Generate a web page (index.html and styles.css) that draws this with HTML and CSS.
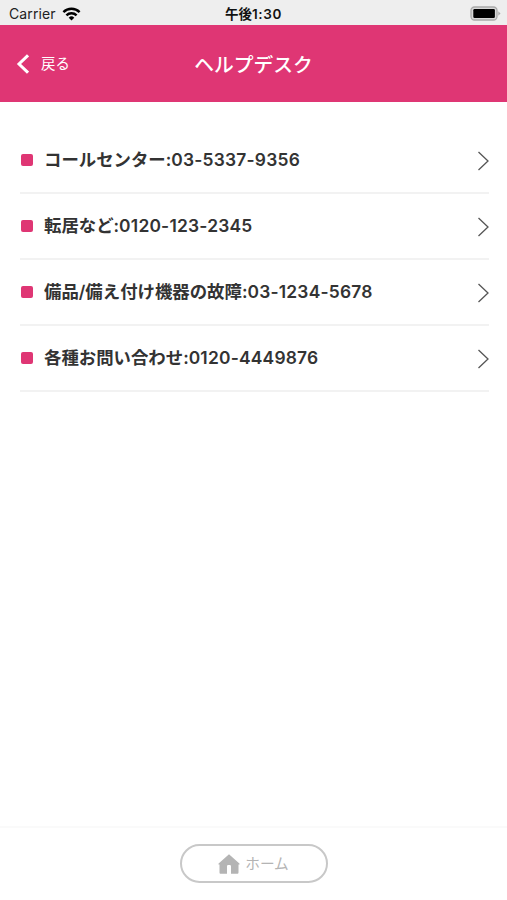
FILE: index.html
```html
<!DOCTYPE html>
<html lang="ja">
<head>
    <meta charset="UTF-8">
    <meta name="viewport" content="width=device-width, initial-scale=1.0">
    <title>ヘルプデスク</title>
    <link rel="stylesheet" href="styles.css">
</head>
<body>

<div class="status-bar">
    <div class="carrier">
        <span>Carrier</span>
        <svg class="wifi" width="19" height="14" viewBox="0 0 18 14" fill="none" stroke="#000" stroke-width="2.4">
            <path d="M0.9 5.1a11.5 11.5 0 0 1 16.2 0"/>
            <path d="M3.9 8.3a7.2 7.2 0 0 1 10.2 0"/>
            <path d="M6.2 10.7a4 4 0 0 1 5.6 0L9 13.6z" fill="#000" stroke="none"/>
        </svg>
    </div>
    <div class="clock">午後<span class="time">1:30</span></div>
    <svg class="battery" width="31" height="15" viewBox="0 0 31 15">
        <rect x="1" y="1" width="26" height="13" rx="3.5" fill="#d8d8d8" stroke="#a9a9a9" stroke-width="1.3"/>
        <rect x="3.3" y="3" width="21.6" height="9" rx="1.2" fill="#000"/>
        <path d="M28.3 5.3l2.2 2.2-2.2 2.2z" fill="#a9a9a9"/>
    </svg>
</div>

<div class="header">
    <a class="back" href="#">
        <svg width="14" height="20" viewBox="0 0 14 20" fill="none" stroke="#fff" stroke-width="3">
            <path d="M13 1.3L4 10l9 8.7"/>
        </svg>
        <span>戻る</span>
    </a>
    <h1 class="title">ヘルプデスク</h1>
</div>

<ul class="list">
    <li class="item">
        <span class="mark"></span>
        <span class="label">コールセンター:<span class="tel">03-5337-9356</span></span>
        <svg class="arrow" width="12" height="20" viewBox="0 0 12 20"><path d="M1.500 1l9.500 9-9.500 9"/></svg>
    </li>
    <li class="item">
        <span class="mark"></span>
        <span class="label">転居など:<span class="tel">0120-123-2345</span></span>
        <svg class="arrow" width="12" height="20" viewBox="0 0 12 20"><path d="M1.500 1l9.500 9-9.500 9"/></svg>
    </li>
    <li class="item">
        <span class="mark"></span>
        <span class="label">備品/備え付け機器の故障:<span class="tel">03-1234-5678</span></span>
        <svg class="arrow" width="12" height="20" viewBox="0 0 12 20"><path d="M1.500 1l9.500 9-9.500 9"/></svg>
    </li>
    <li class="item">
        <span class="mark"></span>
        <span class="label">各種お問い合わせ:<span class="tel">0120-4449876</span></span>
        <svg class="arrow" width="12" height="20" viewBox="0 0 12 20"><path d="M1.500 1l9.500 9-9.500 9"/></svg>
    </li>
</ul>

<div class="footer">
    <a class="home-button" href="#">
        <svg width="22" height="20" viewBox="0 0 22 20" fill="#b4b4b4">
            <path d="M11 0.3L0.6 9.4c-.4.5-.2 1.100.4 1.100H1.500V18.200c0 1 .4 1.500 1.400 1.500H9V12.500c0-1 .4-1.500 1.300-1.500h1.400c.9 0 1.300.5 1.300 1.500v7.200h6.100c1 0 1.400-.5 1.400-1.500v-7.700h.5c.6 0 .8-.6.400-1.100z"/>
        </svg>
        <span>ホーム</span>
    </a>
</div>

</body>
</html>
```
FILE: styles.css
```css
* {
    box-sizing: border-box;
}
body {
    display: flex;
    flex-direction: column;
    height: 100vh;
    margin: 0;
    background-color: #fff;
    color: #333;
    font-family: Inter, "Noto Sans CJK JP", sans-serif;
}
a {
    color: inherit;
    text-decoration: none;
}

/* Status bar */
.status-bar {
    display: grid;
    grid-template-columns: 1fr auto 1fr;
    align-items: center;
    height: 25px;
    padding: 2px 6px 0 9px;
    background-color: #eee;
    color: #222;
    font-size: 14px;
    line-height: 20px;
}
.carrier {
    display: flex;
    align-items: center;
    gap: 6px;
    letter-spacing: 0.1px;
}
.clock {
    margin-right: 3px;
    color: #111;
    font-size: 13.5px;
    font-weight: 600;
}
.time {
    letter-spacing: 0.6px;
}
.battery {
    justify-self: end;
}

/* Header */
.header {
    display: grid;
    grid-template-columns: 1fr auto 1fr;
    align-items: center;
    height: 77px;
    padding: 0 15px;
    background-color: #df3674;
    color: #fff;
}
.back {
    display: flex;
    align-items: center;
    gap: 12px;
    font-size: 14.4px;
}
.back span {
    padding-bottom: 2px;
}
.title {
    margin: 0;
    font-size: 19.8px;
    font-weight: 500;
}

/* Phone list */
.list {
    flex: 1;
    margin: 0;
    padding: 26px 18px 0 20px;
    list-style: none;
}
.item {
    display: flex;
    align-items: center;
    height: 66px;
    border-bottom: 2px solid #f2f2f2;
}
.mark {
    width: 12px;
    height: 12px;
    margin: 0 11px 0 1px;
    border-radius: 2px;
    background-color: #df3674;
}
.label {
    flex: 1;
    padding-bottom: 3px;
    font-size: 17.4px;
    font-weight: 600;
    white-space: nowrap;
}
.tel {
    letter-spacing: 0.22px;
}
.arrow {
    margin-top: 1px;
    fill: none;
    stroke: #555;
    stroke-width: 1.3;
}

/* Footer */
.footer {
    display: flex;
    justify-content: center;
    height: 74px;
    padding-top: 16px;
    border-top: 2px solid #fafafa;
}
.home-button {
    display: flex;
    align-items: center;
    justify-content: center;
    gap: 5px;
    width: 148px;
    height: 39px;
    border: 2px solid #c8c8c8;
    border-radius: 20px;
    color: #b4b4b4;
    font-size: 14.7px;
}
.home-button span {
    padding-bottom: 3px;
}
```
